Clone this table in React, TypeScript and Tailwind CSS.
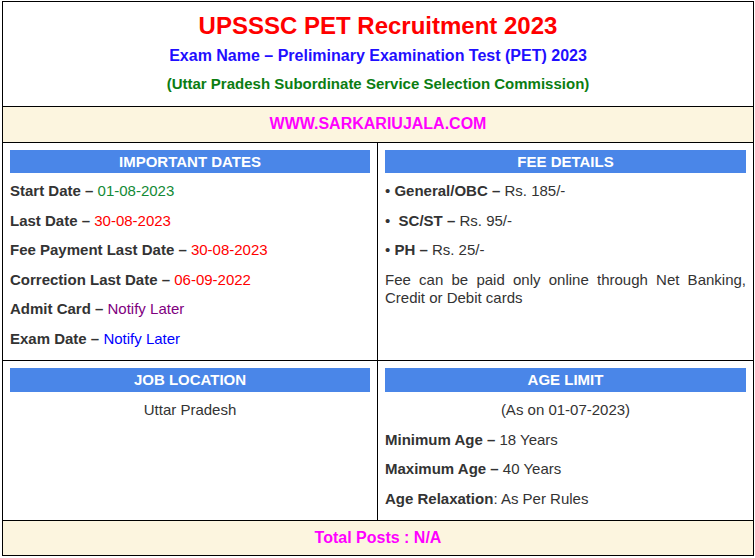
import React from "react";

const Header = ({ children, h }: { children: React.ReactNode; h: string }) => (
  <div className={`${h} bg-[#4a86e8] text-center text-[15px] font-bold text-white`}>{children}</div>
);

export default function App() {
  return (
    <div className="ml-[2px] mt-[1px] w-[752px] border border-black font-['Liberation_Sans',Arial,sans-serif] text-[#333]">
      <div className="flex h-[104px] flex-col items-center pt-[10px] text-center">
        <h1 className="text-[24px] font-bold leading-[28px] text-[#ff0000]">UPSSSC PET Recruitment 2023</h1>
        <p className="mt-[6px] text-[16px] font-bold leading-[20px] text-[#1f0fff]">
          Exam Name – Preliminary Examination Test (PET) 2023
        </p>
        <p className="mt-[8px] text-[15px] font-bold leading-[20px] text-[#0b7d12]">
          (Uttar Pradesh Subordinate Service Selection Commission)
        </p>
      </div>
      <div className="h-[36px] border-t border-black bg-[#fcf5df] pt-[7px] text-center text-[16px] font-bold leading-[20px] text-[#ff00ff]">
        WWW.SARKARIUJALA.COM
      </div>
      <div className="flex h-[218px] border-t border-black">
        <div className="w-[374px] px-[7px] pt-[7px]">
          <Header h="h-[23px] leading-[23px]">IMPORTANT DATES</Header>
          <div className="mt-[9px] flex flex-col gap-[11px] text-[15px] leading-[18.6px]">
            <p><b>Start Date –</b> <span className="text-[#138a36]">01-08-2023</span></p>
            <p><b>Last Date –</b> <span className="text-[#ff0000]">30-08-2023</span></p>
            <p><b>Fee Payment Last Date –</b> <span className="text-[#ff0000]">30-08-2023</span></p>
            <p><b>Correction Last Date –</b> <span className="text-[#ff0000]">06-09-2022</span></p>
            <p><b>Admit Card –</b> <span className="text-[#800080]">Notify Later</span></p>
            <p><b>Exam Date –</b> <span className="text-[#0000ff]">Notify Later</span></p>
          </div>
        </div>
        <div className="flex-1 border-l border-black px-[7px] pt-[7px]">
          <Header h="h-[23px] leading-[23px]">FEE DETAILS</Header>
          <div className="mt-[9px] flex flex-col gap-[11px] text-[15px] leading-[18.6px]">
            <p>• <b>General/OBC –</b> Rs. 185/-</p>
            <p>•{"\u00a0"} <b>SC/ST –</b> Rs. 95/-</p>
            <p>• <b>PH –</b> Rs. 25/-</p>
            <p className="text-justify">Fee can be paid only online through Net Banking, Credit or Debit cards</p>
          </div>
        </div>
      </div>
      <div className="flex h-[160px] border-t border-black">
        <div className="w-[374px] px-[7px] pt-[7px]">
          <Header h="h-[24px] leading-[24px]">JOB LOCATION</Header>
          <div className="mt-[9px] text-center text-[15px] leading-[18.6px]">
            <p>Uttar Pradesh</p>
          </div>
        </div>
        <div className="flex-1 border-l border-black px-[7px] pt-[7px]">
          <Header h="h-[24px] leading-[24px]">AGE LIMIT</Header>
          <div className="mt-[9px] flex flex-col gap-[11px] text-[15px] leading-[18.6px]">
            <p className="text-center">(As on 01-07-2023)</p>
            <p><b>Minimum Age –</b> 18 Years</p>
            <p><b>Maximum Age –</b> 40 Years</p>
            <p><b>Age Relaxation</b>: As Per Rules</p>
          </div>
        </div>
      </div>
      <div className="h-[35px] border-t border-black bg-[#fcf5df] pt-[7px] text-center text-[16px] font-bold leading-[20px] text-[#ff00ff]">
        Total Posts : N/A
      </div>
    </div>
  );
}
